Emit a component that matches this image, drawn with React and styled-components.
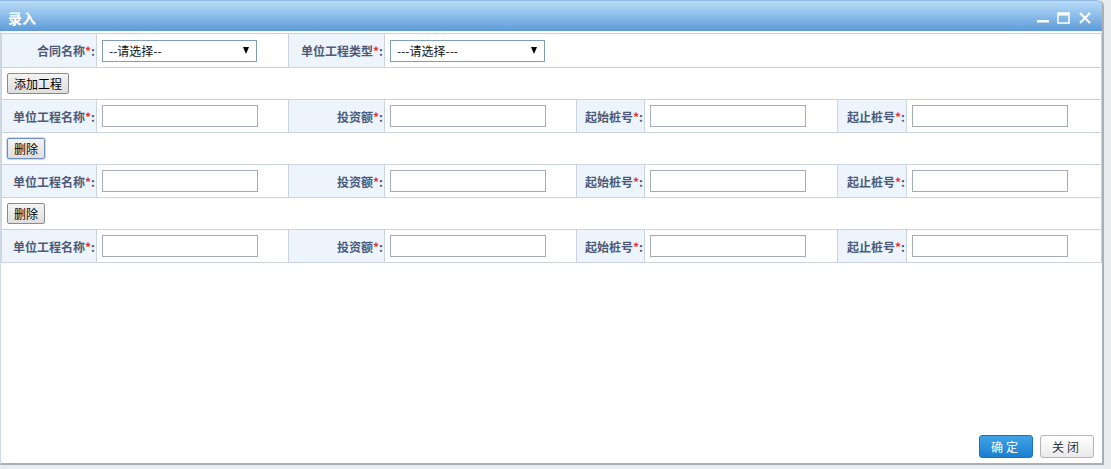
import React from 'react'
import styled, { createGlobalStyle } from 'styled-components'

const GlobalStyle = createGlobalStyle`
  html, body {
    margin: 0;
    padding: 0;
    background: #e9ecef;
    font-family: "Liberation Sans", "Noto Sans CJK SC", sans-serif;
    font-size: 12px;
  }
`

const Window = styled.div`
  width: 1104px;
  height: 465px;
  background: #fff;
  border-left: 1px solid #d0d8e2;
  border-right: 2px solid #a9b0b8;
  border-bottom: 2px solid #a9b0b8;
  border-radius: 0 6px 0 0;
  box-sizing: border-box;
  display: flex;
  flex-direction: column;
`

const TitleBar = styled.div`
  height: 31px;
  flex: none;
  display: flex;
  align-items: center;
  justify-content: space-between;
  padding: 0 10px 0 8px;
  margin-left: -1px;
  background: linear-gradient(#b9daf6, #8fc0ec 45%, #5d9ad6);
  border-top: 1px solid #8db6e0;
  border-radius: 0 6px 0 0;
  box-sizing: border-box;
`

const Title = styled.span`
  color: #fff;
  font-weight: bold;
  font-size: 14px;
  font-family: "Noto Sans CJK SC", sans-serif;
  margin-top: 3px;
`

const Tools = styled.div`
  display: flex;
  align-items: center;
  gap: 8px;
  margin-top: 4px;
`

const Body = styled.div`
  flex: 1;
  padding: 2px 3px 0 0;
`

const Form = styled.table`
  width: 1100px;
  border-collapse: collapse;
  table-layout: fixed;
`

const Row = styled.tr`
  height: ${p => p.$h || 32}px;
`

const Label = styled.td`
  background: #eef4fb;
  border: 1px solid #c9d4e0;
  text-align: right;
  padding: 0 1px 0 0;
  color: #4b5a78;
  font-weight: bold;
  font-family: "Noto Sans CJK SC", sans-serif;
  font-size: 12px;
  white-space: nowrap;
`

const Star = styled.span`
  color: #e0313a;
`

const Cell = styled.td`
  border: 1px solid #c9d4e0;
  padding: 0 0 0 5px;
`

const Input = styled.input`
  display: block;
  width: 156px;
  height: 22px;
  box-sizing: border-box;
  border: 1px solid #a5acb5;
  background: #fff;
  margin: 0;
`

const Select = styled.div`
  width: 155px;
  height: 22px;
  box-sizing: border-box;
  border: 1px solid #7f9db9;
  display: flex;
  align-items: center;
  justify-content: space-between;
  padding: 0 7px 0 6px;
  font-size: 12px;
  font-family: "Noto Sans CJK SC", sans-serif;
  color: #111;
  &::after {
    content: "";
    border-left: 3.5px solid transparent;
    border-right: 3.5px solid transparent;
    border-top: 7px solid #000;
  }
`

const Btn = styled.button`
  height: 21px;
  padding: 0 6px;
  margin: 0 0 0 5px;
  font-size: 12px;
  font-family: "Noto Sans CJK SC", sans-serif;
  color: #000;
  background: linear-gradient(#f4f4f4, #dedede);
  border: 1px solid ${p => (p.$focus ? '#6e8fc4' : '#8a8a8a')};
  border-radius: 2px;
  box-shadow: ${p => (p.$focus ? '0 0 0 1px #c9daf5' : 'none')};
  line-height: 19px;
`

const Footer = styled.div`
  display: flex;
  justify-content: flex-end;
  gap: 7px;
  padding: 0 8px 5px 0;
  margin-top: auto;
`

const FootBtn = styled.button`
  width: 54px;
  height: 23px;
  font-size: 12px;
  font-family: "Noto Sans CJK SC", sans-serif;
  letter-spacing: 3px;
  border-radius: 3px;
  color: ${p => (p.$primary ? '#fff' : '#333')};
  background: ${p => (p.$primary ? 'linear-gradient(#3fa3e6, #1c7fcf)' : 'linear-gradient(#fff, #eaeaea)')};
  border: 1px solid ${p => (p.$primary ? '#1a72b8' : '#b5b5b5')};
`

const FieldLabel = ({ text }) => (
  <Label>
    {text}
    <Star>*</Star>:
  </Label>
)

const ProjectRow = () => (
  <Row $h={33}>
    <FieldLabel text="单位工程名称" />
    <Cell><Input /></Cell>
    <FieldLabel text="投资额" />
    <Cell><Input /></Cell>
    <FieldLabel text="起始桩号" />
    <Cell><Input /></Cell>
    <FieldLabel text="起止桩号" />
    <Cell><Input /></Cell>
  </Row>
)

const BtnRow = ({ children }) => (
  <Row>
    <Cell colSpan={8} style={{ paddingLeft: 0 }}>{children}</Cell>
  </Row>
)

export default function App() {
  return (
    <>
      <GlobalStyle />
      <Window>
        <TitleBar>
          <Title>录入</Title>
          <Tools>
            <svg width="12" height="12" viewBox="0 0 12 12">
              <rect x="0" y="8" width="12" height="2.5" fill="#fff" />
            </svg>
            <svg width="13" height="12" viewBox="0 0 13 12">
              <rect x="1" y="1" width="11" height="10" fill="none" stroke="#fff" strokeWidth="1.5" />
              <rect x="1" y="1" width="11" height="2.5" fill="#fff" />
            </svg>
            <svg width="14" height="14" viewBox="0 0 14 14">
              <path d="M2 2 L12 12 M12 2 L2 12" stroke="#fff" strokeWidth="2.2" />
            </svg>
          </Tools>
        </TitleBar>
        <Body>
          <Form>
            <colgroup>
              <col style={{ width: 95 }} />
              <col style={{ width: 192 }} />
              <col style={{ width: 96 }} />
              <col style={{ width: 192 }} />
              <col style={{ width: 68 }} />
              <col style={{ width: 193 }} />
              <col style={{ width: 69 }} />
              <col style={{ width: 195 }} />
            </colgroup>
            <tbody>
              <Row $h={34}>
                <FieldLabel text="合同名称" />
                <Cell><Select>--请选择--</Select></Cell>
                <FieldLabel text="单位工程类型" />
                <Cell colSpan={5}><Select>---请选择---</Select></Cell>
              </Row>
              <BtnRow><Btn>添加工程</Btn></BtnRow>
              <ProjectRow />
              <BtnRow><Btn $focus>删除</Btn></BtnRow>
              <ProjectRow />
              <BtnRow><Btn>删除</Btn></BtnRow>
              <ProjectRow />
            </tbody>
          </Form>
        </Body>
        <Footer>
          <FootBtn $primary>确定</FootBtn>
          <FootBtn>关闭</FootBtn>
        </Footer>
      </Window>
    </>
  )
}
